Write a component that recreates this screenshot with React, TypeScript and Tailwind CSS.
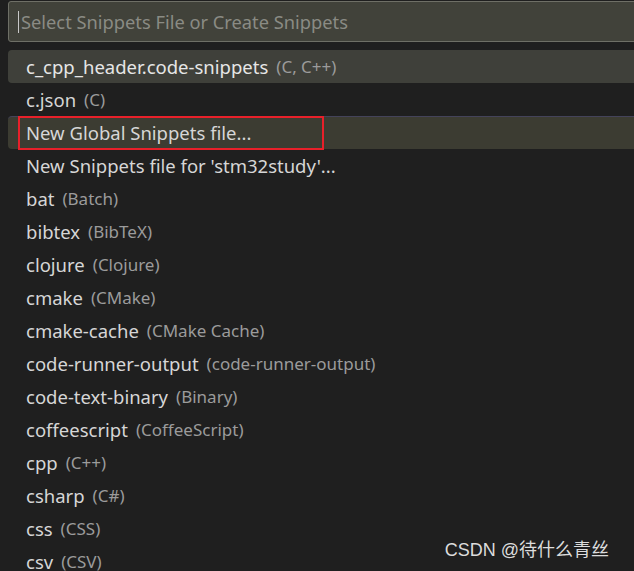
const items: { label: string; desc?: string }[] = [
  { label: "c_cpp_header.code-snippets", desc: "C, C++" },
  { label: "c.json", desc: "C" },
  { label: "New Global Snippets file..." },
  { label: "New Snippets file for 'stm32study'..." },
  { label: "bat", desc: "Batch" },
  { label: "bibtex", desc: "BibTeX" },
  { label: "clojure", desc: "Clojure" },
  { label: "cmake", desc: "CMake" },
  { label: "cmake-cache", desc: "CMake Cache" },
  { label: "code-runner-output", desc: "code-runner-output" },
  { label: "code-text-binary", desc: "Binary" },
  { label: "coffeescript", desc: "CoffeeScript" },
  { label: "cpp", desc: "C++" },
  { label: "csharp", desc: "C#" },
  { label: "css", desc: "CSS" },
  { label: "csv", desc: "CSV" },
];

export default function App() {
  return (
    <div
      className="relative w-[634px] h-[571px] overflow-hidden bg-[#1f1f1f]"
      style={{ fontFamily: "'Noto Sans', 'Open Sans', sans-serif" }}
    >
      <div className="pl-[8px] pt-[1px]">
        <div className="h-[41px] -mr-4 flex items-center pl-[9px] rounded-l-[3px] border border-[#6e6f66] bg-[#41423a]">
          <span className="w-px h-[22px] bg-[#c8c8c8]" />
          <span className="ml-[2px] text-[18.3px] text-[#8a8b84]">Select Snippets File or Create Snippets</span>
        </div>
      </div>

      <div className="mt-[8px]">
        {items.map((it, i) => (
          <div
            key={i}
            className={
              "ml-[8px] h-[33px] flex items-center pl-[18px] rounded-l-[4px] " +
              (i === 0 ? "bg-[#3f403a]" : i === 2 ? "bg-[#3c3c32] border-t border-[#44435a]" : "")
            }
          >
            <span
              className={
                "text-[18.5px] whitespace-nowrap " +
                (i === 0 ? "text-[#e6e6e6] " : "text-[#d6d6d6] ") +
                (i === 2 ? "outline-2 outline-[#e8202a] outline-offset-[1px] -ml-[5px] pl-[5px] pr-[70px]" : "")
              }
            >
              {it.label}
            </span>
            {it.desc && <span className="ml-[8px] text-[17px] text-[#9b9b9b] whitespace-nowrap">({it.desc})</span>}
          </div>
        ))}
      </div>

      <div
        className="absolute right-[25px] bottom-[7px] text-[18px] text-[#dcdcdc]"
        style={{ fontFamily: "'Liberation Sans', 'Noto Sans CJK SC', sans-serif" }}
      >
        CSDN @待什么青丝
      </div>
    </div>
  );
}
